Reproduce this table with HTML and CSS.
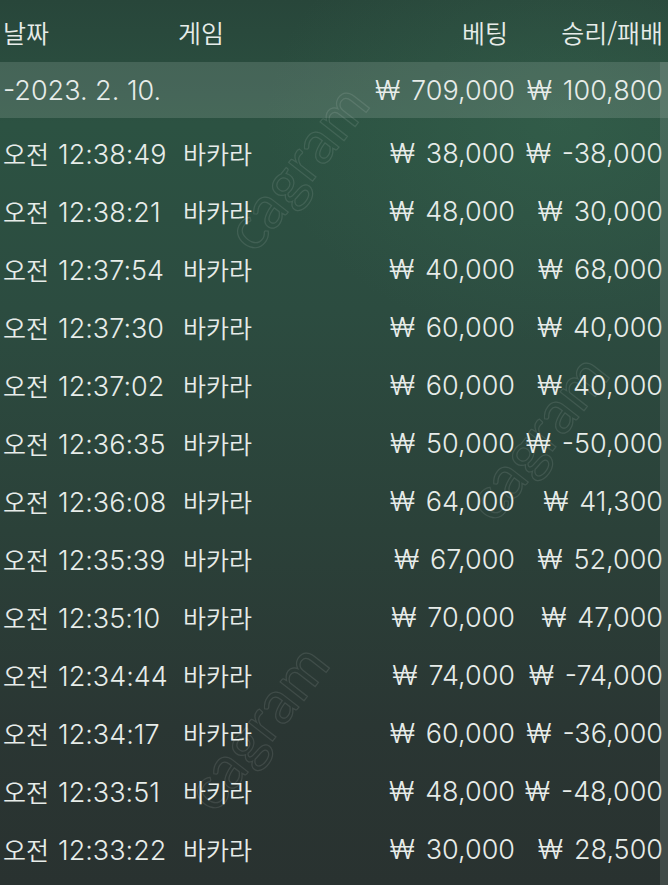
FILE: index.html
```html
<!DOCTYPE html>
<html lang="ko">
<head>
<meta charset="utf-8">
<title>베팅 내역</title>
<link rel="stylesheet" href="styles.css">
</head>
<body>
<div class="screen">
  <div class="row head">
    <div class="c-date ko">날짜</div>
    <div class="c-game ko head-game">게임</div>
    <div class="c-bet ko head-bet">베팅</div>
    <div class="c-win ko">승리/패배</div>
  </div>
  <div class="row summary">
    <div class="c-date">-2023. 2. 10.</div>
    <div class="c-game"></div>
    <div class="c-bet"><span class="won">₩</span>709,000</div>
    <div class="c-win"><span class="won">₩</span>100,800</div>
  </div>
  <div class="list">
    <div class="row"><div class="c-date"><span class="ko ampm">오전</span>12:38:49</div><div class="c-game ko">바카라</div><div class="c-bet"><span class="won">₩</span>38,000</div><div class="c-win"><span class="won">₩</span>-38,000</div></div>
    <div class="row"><div class="c-date"><span class="ko ampm">오전</span>12:38:21</div><div class="c-game ko">바카라</div><div class="c-bet"><span class="won">₩</span>48,000</div><div class="c-win"><span class="won">₩</span>30,000</div></div>
    <div class="row"><div class="c-date"><span class="ko ampm">오전</span>12:37:54</div><div class="c-game ko">바카라</div><div class="c-bet"><span class="won">₩</span>40,000</div><div class="c-win"><span class="won">₩</span>68,000</div></div>
    <div class="row"><div class="c-date"><span class="ko ampm">오전</span>12:37:30</div><div class="c-game ko">바카라</div><div class="c-bet"><span class="won">₩</span>60,000</div><div class="c-win"><span class="won">₩</span>40,000</div></div>
    <div class="row"><div class="c-date"><span class="ko ampm">오전</span>12:37:02</div><div class="c-game ko">바카라</div><div class="c-bet"><span class="won">₩</span>60,000</div><div class="c-win"><span class="won">₩</span>40,000</div></div>
    <div class="row"><div class="c-date"><span class="ko ampm">오전</span>12:36:35</div><div class="c-game ko">바카라</div><div class="c-bet"><span class="won">₩</span>50,000</div><div class="c-win"><span class="won">₩</span>-50,000</div></div>
    <div class="row"><div class="c-date"><span class="ko ampm">오전</span>12:36:08</div><div class="c-game ko">바카라</div><div class="c-bet"><span class="won">₩</span>64,000</div><div class="c-win"><span class="won">₩</span>41,300</div></div>
    <div class="row"><div class="c-date"><span class="ko ampm">오전</span>12:35:39</div><div class="c-game ko">바카라</div><div class="c-bet"><span class="won">₩</span>67,000</div><div class="c-win"><span class="won">₩</span>52,000</div></div>
    <div class="row"><div class="c-date"><span class="ko ampm">오전</span>12:35:10</div><div class="c-game ko">바카라</div><div class="c-bet"><span class="won">₩</span>70,000</div><div class="c-win"><span class="won">₩</span>47,000</div></div>
    <div class="row"><div class="c-date"><span class="ko ampm">오전</span>12:34:44</div><div class="c-game ko">바카라</div><div class="c-bet"><span class="won">₩</span>74,000</div><div class="c-win"><span class="won">₩</span>-74,000</div></div>
    <div class="row"><div class="c-date"><span class="ko ampm">오전</span>12:34:17</div><div class="c-game ko">바카라</div><div class="c-bet"><span class="won">₩</span>60,000</div><div class="c-win"><span class="won">₩</span>-36,000</div></div>
    <div class="row"><div class="c-date"><span class="ko ampm">오전</span>12:33:51</div><div class="c-game ko">바카라</div><div class="c-bet"><span class="won">₩</span>48,000</div><div class="c-win"><span class="won">₩</span>-48,000</div></div>
    <div class="row"><div class="c-date"><span class="ko ampm">오전</span>12:33:22</div><div class="c-game ko">바카라</div><div class="c-bet"><span class="won">₩</span>30,000</div><div class="c-win"><span class="won">₩</span>28,500</div></div>
  </div>
  <div class="scrollbar"></div>
  <div class="wm wm1">cagram</div>
  <div class="wm wm2">cagram</div>
  <div class="wm wm4">cagram</div>
</div>
</body>
</html>
```

FILE: styles.css
```css
html, body {
  margin: 0;
  padding: 0;
}
body {
  width: 668px;
  height: 885px;
  overflow: hidden;
  background: #2b4239;
}
.screen {
  position: relative;
  width: 668px;
  height: 885px;
  overflow: hidden;
  color: #e7ece9;
  font-family: "Inter", "Roboto", "Noto Sans CJK KR", sans-serif;
  font-size: 27px;
  font-weight: 300;
  background:
    radial-gradient(ellipse 420px 320px at 560px 120px, rgba(60, 110, 85, 0.35), rgba(60, 110, 85, 0) 70%),
    linear-gradient(to bottom, #28463a 0%, #2c5242 14%, #2c4c40 35%, #2b4139 60%, #2a3633 82%, #293230 100%);
}
.row {
  display: grid;
  grid-template-columns: 180px 190px 142px 148px;
  align-items: center;
  height: 58px;
  padding-left: 3px;
  white-space: nowrap;
}
.head {
  height: 62px;
  padding-top: 2px;
  box-sizing: border-box;
}
.summary {
  height: 56px;
  background: rgba(170, 185, 178, 0.22);
}
.list {
  padding-top: 6px;
}
.ko {
  font-family: "Noto Sans CJK KR", sans-serif;
  font-size: 25px;
  font-weight: 350;
}
.ampm {
  margin-right: 9px;
}
.c-bet, .c-win {
  text-align: right;
}
.head-game {
  margin-left: -5px;
}
.head-bet {
  padding-right: 7px;
}
.won {
  margin-right: 11px;
}
.scrollbar {
  position: absolute;
  right: 0;
  top: 62px;
  bottom: 0;
  width: 8px;
  background: rgba(150, 165, 160, 0.22);
}
.wm {
  position: absolute;
  font-family: "Lato", sans-serif;
  font-size: 60px;
  font-weight: 400;
  color: transparent;
  -webkit-text-stroke: 1.2px rgba(255, 255, 255, 0.1);
  transform: rotate(-52deg);
  transform-origin: center;
  pointer-events: none;
}
.wm1 { left: 200px; top: 130px; }
.wm2 { left: 440px; top: 400px; }
.wm4 { left: 160px; top: 690px; }
```
